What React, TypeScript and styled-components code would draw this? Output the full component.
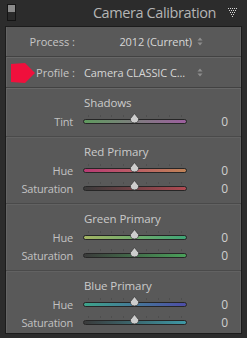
import styled, { createGlobalStyle } from 'styled-components';

const GlobalStyle = createGlobalStyle`
  html, body {
    margin: 0;
    padding: 0;
    background: #2c2c2c;
  }
  body {
    font-family: 'Open Sans', 'DejaVu Sans', sans-serif;
    width: 247px;
    height: 338px;
    overflow: hidden;
  }
`;

const Header = styled.div`
  height: 26px;
  display: flex;
  align-items: center;
  padding: 0 9px 0 7px;
  box-sizing: border-box;
`;

const Switch = styled.div`
  width: 7px;
  height: 15px;
  border: 1px solid #141414;
  background: linear-gradient(#8a8a8a 0, #8a8a8a 45%, #2a2a2a 45%);
  margin-top: -2px;
`;

const Title = styled.div`
  flex: 1;
  text-align: right;
  font-size: 14.5px;
  letter-spacing: -0.4px;
  color: #b5b5b5;
  padding-right: 12px;
  margin-top: -1px;
`;

const Panel = styled.div`
  margin: 0 5px;
  border: 1px solid #1c1c1c;
  background: #595959;
  box-shadow: inset 1px 0 0 #646464, inset -1px 0 0 #646464;
  height: 308px;
  box-sizing: border-box;
  position: relative;
`;

const MenuRow = styled.div<{ $h: number }>`
  height: ${(p) => p.$h}px;
  display: flex;
  align-items: center;
  border-bottom: 1px solid #424242;
  box-shadow: 0 1px 0 #676767;
  font-size: 11px;
  color: #c6c6c6;
`;

const MenuLabel = styled.div`
  width: 69px;
  text-align: right;
  box-sizing: border-box;
`;

const MenuValue = styled.div<{ $align: string }>`
  width: 108px;
  margin-left: 9px;
  text-align: ${(p) => p.$align};
  color: #d6d6d6;
  white-space: nowrap;
  letter-spacing: -0.1px;
`;

const Arrows = styled.svg`
  margin-left: 5px;
`;

const Annotation = styled.svg`
  position: absolute;
  left: 3px;
  top: 35px;
  filter: blur(0.6px);
`;

const Section = styled.div<{ $last?: boolean }>`
  padding: 6px 0 ${(p) => (p.$last ? 5 : 6)}px;
  border-bottom: ${(p) => (p.$last ? 'none' : '1px solid #4a4a4a')};
  box-shadow: ${(p) => (p.$last ? 'none' : '0 1px 0 #626262')};
`;

const Heading = styled.div`
  height: 18px;
  line-height: 18px;
  padding-left: 78px;
  font-size: 11.5px;
  letter-spacing: -0.1px;
  color: #cbcbcb;
`;

const SliderRow = styled.div`
  height: 18px;
  display: flex;
  align-items: center;
  font-size: 11px;
  color: #c2c2c2;
`;

const SliderLabel = styled.div`
  width: 67px;
  text-align: right;
  letter-spacing: -0.2px;
`;

const Track = styled.div`
  position: relative;
  margin-left: 10px;
  width: 102px;
  height: 3px;
  border: 1px solid #262626;
  border-radius: 3px;
  margin-top: 1px;
`;

const Ticks = styled.div`
  position: absolute;
  left: 4px;
  right: 4px;
  top: -5px;
  height: 2px;
  background: repeating-linear-gradient(
    90deg,
    #4e4e4e 0,
    #4e4e4e 1px,
    transparent 1px,
    transparent 11.6px
  );
`;

const Thumb = styled.svg`
  position: absolute;
  left: 45px;
  top: -7px;
`;

const Value = styled.div`
  flex: 1;
  text-align: right;
  padding-right: 13px;
  font-size: 12px;
  color: #cfcfcf;
`;

const dots: [number, number][] = [];
for (let r = 0; r < 5; r++) {
  for (let c = 0; c < 5 - r; c++) dots.push([r + c * 2, r * 2]);
}

function Slider({ label, from, to }: { label: string; from: string; to: string }) {
  return (
    <SliderRow>
      <SliderLabel>{label}</SliderLabel>
      <Track style={{ background: `linear-gradient(90deg, ${from}, ${to})` }}>
        <Ticks />
        <Thumb width="11" height="12" viewBox="0 0 11 12">
          <path d="M5.5 0.5 L9.5 5.5 Q10 9.5 5.5 10 Q1 9.5 1.5 5.5 Z" fill="#cdcdcd" stroke="#3a3a3a" strokeWidth="0.8" />
        </Thumb>
      </Track>
      <Value>0</Value>
    </SliderRow>
  );
}

const sections = [
  { title: 'Shadows', sliders: [{ label: 'Tint', from: '#5f9a5e', to: '#9c5f9e' }] },
  {
    title: 'Red Primary',
    sliders: [
      { label: 'Hue', from: '#b83a74', to: '#c08357' },
      { label: 'Saturation', from: '#3a3a3a', to: '#b04a52' },
    ],
  },
  {
    title: 'Green Primary',
    sliders: [
      { label: 'Hue', from: '#a3b463', to: '#3fa576' },
      { label: 'Saturation', from: '#3a3a3a', to: '#4aa05a' },
    ],
  },
  {
    title: 'Blue Primary',
    sliders: [
      { label: 'Hue', from: '#3da38a', to: '#4d4da6' },
      { label: 'Saturation', from: '#3a3a3a', to: '#3e98a6' },
    ],
  },
];

export default function App() {
  return (
    <>
      <GlobalStyle />
      <Header>
        <Switch />
        <Title>Camera Calibration</Title>
        <svg width="10" height="10" viewBox="0 0 10 10">
          {dots.map(([x, y], i) => (
            <rect key={i} x={x} y={y} width="1" height="1" fill="#d8d8d8" />
          ))}
        </svg>
      </Header>
      <Panel>
        <MenuRow $h={29}>
          <MenuLabel>Process :</MenuLabel>
          <MenuValue $align="right">2012 (Current)</MenuValue>
          <Arrows width="6" height="9" viewBox="0 0 6 9">
            <path d="M0.5 3.5 L3 0.5 L5.5 3.5 Z M0.5 5.5 L3 8.5 L5.5 5.5 Z" fill="#8e8e8e" />
          </Arrows>
        </MenuRow>
        <MenuRow $h={30}>
          <MenuLabel>Profile :</MenuLabel>
          <MenuValue $align="left">Camera CLASSIC C...</MenuValue>
          <Arrows width="6" height="9" viewBox="0 0 6 9">
            <path d="M0.5 3.5 L3 0.5 L5.5 3.5 Z M0.5 5.5 L3 8.5 L5.5 5.5 Z" fill="#8e8e8e" />
          </Arrows>
        </MenuRow>
        <Annotation width="28" height="22" viewBox="0 0 28 22">
          <path d="M2 2 L16 1 L26 11 L16 21 L2 20 Z" fill="#f0103c" />
        </Annotation>
        {sections.map((s, i) => (
          <Section key={s.title} $last={i === sections.length - 1}>
            <Heading>{s.title}</Heading>
            {s.sliders.map((sl) => (
              <Slider key={sl.label} {...sl} />
            ))}
          </Section>
        ))}
      </Panel>
    </>
  );
}
